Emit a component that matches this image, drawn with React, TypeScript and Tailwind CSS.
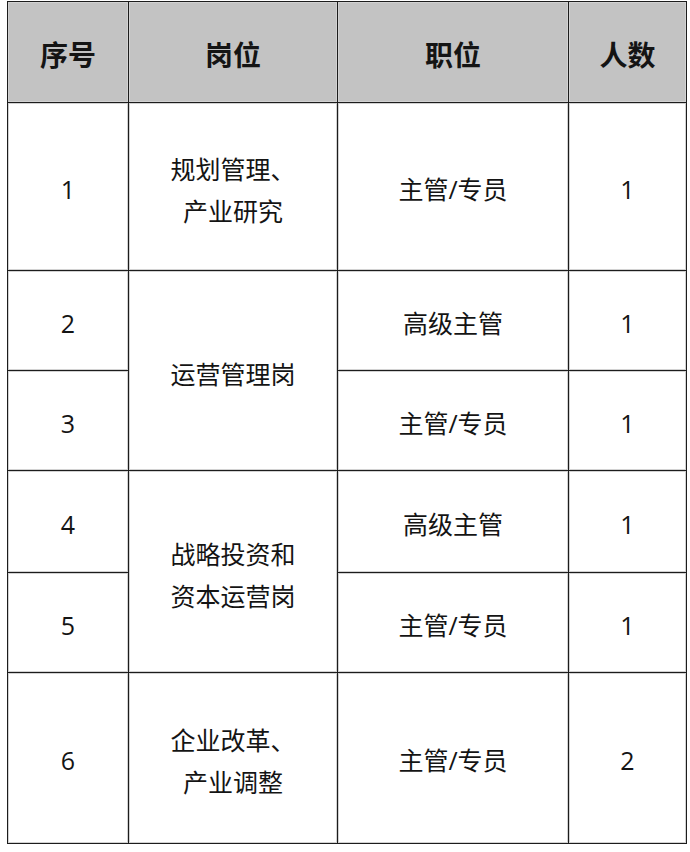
const rows = [
  { no: "1", pos: ["规划管理、", "产业研究"], posSpan: 1, title: "主管/专员", count: "1", h: "h-[168px]" },
  { no: "2", pos: ["运营管理岗"], posSpan: 2, title: "高级主管", count: "1", h: "h-[100px]" },
  { no: "3", pos: null, posSpan: 0, title: "主管/专员", count: "1", h: "h-[100px]" },
  { no: "4", pos: ["战略投资和", "资本运营岗"], posSpan: 2, title: "高级主管", count: "1", h: "h-[102px]" },
  { no: "5", pos: null, posSpan: 0, title: "主管/专员", count: "1", h: "h-[100px]" },
  { no: "6", pos: ["企业改革、", "产业调整"], posSpan: 1, title: "主管/专员", count: "2", h: "h-[171px]" },
];

const cell =
  "border border-[#1c1c1c] text-center align-middle shadow-[inset_0_0_0_1px_#d2d2d2] px-0 pt-[6px] pb-0";

export default function App() {
  return (
    <div
      className="w-[690px] h-[852px] bg-white pl-[7px] pt-[1px] text-[#141414]"
      style={{ fontFamily: '"Open Sans", "Noto Sans CJK SC", sans-serif' }}
    >
      <table className="w-[679px] table-fixed border-collapse text-[25px]">
        <colgroup>
          <col className="w-[121px]" />
          <col className="w-[209px]" />
          <col className="w-[231px]" />
          <col className="w-[118px]" />
        </colgroup>
        <thead>
          <tr className="h-[101px] bg-[#c3c3c3] text-[28px] font-bold">
            <th className={cell}>序号</th>
            <th className={cell}>岗位</th>
            <th className={cell}>职位</th>
            <th className={cell}>人数</th>
          </tr>
        </thead>
        <tbody>
          {rows.map((r) => (
            <tr key={r.no} className={r.h}>
              <td className={cell}>{r.no}</td>
              {r.pos && (
                <td className={`${cell} leading-[42px]`} rowSpan={r.posSpan}>
                  {r.pos.map((line) => (
                    <div key={line}>{line}</div>
                  ))}
                </td>
              )}
              <td className={cell}>{r.title}</td>
              <td className={cell}>{r.count}</td>
            </tr>
          ))}
        </tbody>
      </table>
    </div>
  );
}
